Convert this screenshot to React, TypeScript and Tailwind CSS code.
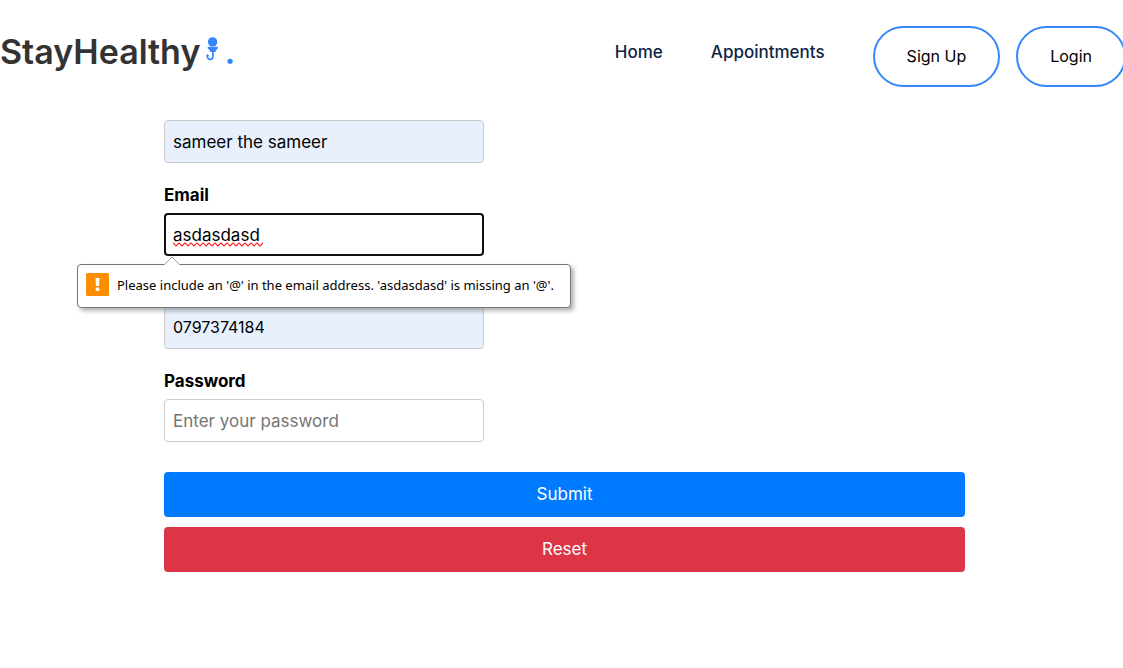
import React, { useState } from "react";

const fieldClass =
  "block h-[43px] w-80 rounded border border-[#ccc] px-2 text-black outline-none placeholder:text-[#757575]";

function LogoMark() {
  return (
    <svg aria-hidden="true" width="14" height="24" viewBox="0 0 14 24" className="mb-1.5 shrink-0 text-[#3685fb]">
      <circle cx="6.6" cy="4.9" r="4.7" fill="currentColor" />
      <path d="M1.7 9.8H11.9V10.6C11.7 12 10.9 12.6 9.9 13.2V14.2C9.1 15.4 4.5 15.4 3.7 14.2V13.2C2.7 12.6 1.9 12 1.7 10.6Z" fill="currentColor" />
      <path d="M6.9 14.5V19C6.9 23.6 1.4 23.6 1.4 19.2V18.4" fill="none" stroke="currentColor" strokeWidth="1.7" />
      <path d="M0 19.3L1.3 16.9L3.6 19.3Z" fill="currentColor" />
    </svg>
  );
}

function Field({ label, id, children }: { label: string; id: string; children: React.ReactNode }) {
  return (
    <div className="relative flex flex-col gap-1.5">
      <label htmlFor={id} className="text-[17px] leading-6 font-bold text-black">
        {label}
      </label>
      {children}
    </div>
  );
}

function SpellingMark() {
  return (
    <svg aria-hidden="true" width="90" height="5" className="absolute top-[59px] left-[9px]">
      <defs>
        <pattern id="squiggle" width="6" height="5" patternUnits="userSpaceOnUse">
          <path d="M-1 0L0 1L3 4L6 1L7 0" fill="none" stroke="#f22" strokeWidth="1.1" />
        </pattern>
      </defs>
      <rect width="90" height="5" fill="url(#squiggle)" />
    </svg>
  );
}

function ValidationBubble() {
  return (
    <div
      role="alert"
      className="absolute top-[81px] -left-[87px] z-10 flex h-11 w-[494px] items-center gap-2 rounded border border-[#767676] bg-white px-2 shadow-[3px_3px_4px_rgba(0,0,0,0.3)]"
    >
      <svg aria-hidden="true" width="18" height="10" viewBox="0 0 18 10" className="absolute -top-[9px] left-[85px]">
        <path d="M1 9L9 1L17 9V10H1Z" fill="#fff" />
        <path d="M1 9L9 1L17 9" fill="none" stroke="#a0a0a0" />
      </svg>
      <svg aria-hidden="true" width="23" height="23" viewBox="0 0 23 23" className="mb-1 shrink-0">
        <rect width="23" height="23" rx="1.5" fill="#ff8d00" />
        <path d="M9.5 5H13.5L13 13H10Z" fill="#fff" />
        <rect x="9.7" y="14.5" width="3.6" height="3.5" rx="1" fill="#fff" />
      </svg>
      <span className="font-['Noto_Sans',sans-serif] text-[13px] whitespace-nowrap text-black">
        Please include an '@' in the email address. 'asdasdasd' is missing an '@'.
      </span>
    </div>
  );
}

export default function App() {
  const [name, setName] = useState("sameer the sameer");
  const [email, setEmail] = useState("asdasdasd");
  const [phone, setPhone] = useState("0797374184");
  const [password, setPassword] = useState("");

  const reset = () => {
    setName("");
    setEmail("");
    setPhone("");
    setPassword("");
  };

  return (
    <div className="min-h-screen overflow-x-hidden bg-white font-['Inter',sans-serif] text-black">
      <header className="flex items-start justify-between pt-[26px]">
        <a href="#home" className="flex items-center text-[34px] leading-[52px] font-semibold text-[#333]">
          StayHealthy
          <span className="flex items-center gap-1 pl-1.5 text-[#3685fb]">
            <LogoMark />
            <span>.</span>
          </span>
        </a>
        <nav className="-mr-[3px] flex shrink-0 items-start">
          <a href="#home" className="mr-12 text-[17px] leading-[52px] font-medium text-[#0f2544]">
            Home
          </a>
          <a href="#appointments" className="mr-12 text-[17px] leading-[52px] font-medium text-[#0f2544]">
            Appointments
          </a>
          <div className="flex gap-4">
            <button type="button" className="h-[61px] rounded-full border-2 border-[#3685fb] px-8 pb-0.5 text-base">
              Sign Up
            </button>
            <button type="button" className="h-[61px] rounded-full border-2 border-[#3685fb] px-8 pb-0.5 text-base">
              Login
            </button>
          </div>
        </nav>
      </header>

      <main className="pt-[33px] pr-[158px] pb-24 pl-[164px]">
        <form className="flex flex-col gap-5" noValidate onSubmit={(e) => e.preventDefault()}>
          <input
            aria-label="Name"
            className={fieldClass + " bg-[#e8f0fe] text-[17px]"}
            value={name}
            onChange={(e) => setName(e.target.value)}
          />
          <Field label="Email" id="email">
            <input
              id="email"
              type="text"
              inputMode="email"
              spellCheck={false}
              className="block h-[43px] w-80 rounded border-2 border-[#101010] px-[7px] text-[17px] text-black outline-none"
              value={email}
              onChange={(e) => setEmail(e.target.value)}
            />
            <SpellingMark />
            <ValidationBubble />
          </Field>
          <div className="pt-[30px]">
            <input
              aria-label="Phone"
              type="tel"
              className={fieldClass + " bg-[#e8f0fe] pb-0.5 text-base"}
              value={phone}
              onChange={(e) => setPhone(e.target.value)}
            />
          </div>
          <Field label="Password" id="password">
            <input
              id="password"
              type="password"
              placeholder="Enter your password"
              className={fieldClass + " bg-white text-[17px]"}
              value={password}
              onChange={(e) => setPassword(e.target.value)}
            />
          </Field>
          <div className="flex flex-col gap-2.5 pt-2.5">
            <button type="submit" className="h-[45px] rounded bg-[#007bff] text-[17px] text-white">
              Submit
            </button>
            <button type="button" onClick={reset} className="h-[45px] rounded bg-[#dc3545] text-[17px] text-white">
              Reset
            </button>
          </div>
        </form>
      </main>
    </div>
  );
}
